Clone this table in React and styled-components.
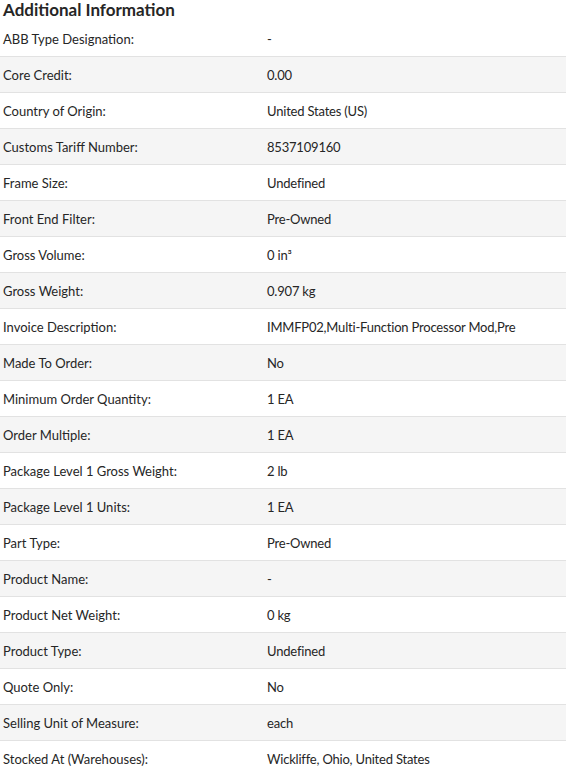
import React from "react";
import styled, { createGlobalStyle } from "styled-components";

const GlobalStyle = createGlobalStyle`
	body {
		margin: 0;
		background: #ffffff;
		font-family: "Lato", "Noto Sans", sans-serif;
		color: #262626;
	}
`;

const Section = styled.section`
	width: 566px;
`;

const Title = styled.h2`
	margin: 0;
	padding: 1px 3px 0;
	height: 20px;
	line-height: 18px;
	font-size: 17px;
	font-weight: 700;
	color: #262626;
`;

const Row = styled.div`
	display: grid;
	grid-template-columns: 264px 1fr;
	align-items: center;
	height: 35px;
	padding-left: 3px;
	border-bottom: 1px solid #e2e2e2;
	background: ${(p) => (p.$shaded ? "#f5f5f5" : "#ffffff")};
	font-size: 13px;
`;

const Label = styled.span`
	color: #262626;
`;

const Value = styled.span`
	color: #262626;
	white-space: nowrap;
	letter-spacing: -0.2px;
`;

const rows = [
	["ABB Type Designation:", "-"],
	["Core Credit:", "0.00"],
	["Country of Origin:", "United States (US)"],
	["Customs Tariff Number:", "8537109160"],
	["Frame Size:", "Undefined"],
	["Front End Filter:", "Pre-Owned"],
	["Gross Volume:", "0 in³"],
	["Gross Weight:", "0.907 kg"],
	["Invoice Description:", "IMMFP02,Multi-Function Processor Mod,Pre"],
	["Made To Order:", "No"],
	["Minimum Order Quantity:", "1 EA"],
	["Order Multiple:", "1 EA"],
	["Package Level 1 Gross Weight:", "2 lb"],
	["Package Level 1 Units:", "1 EA"],
	["Part Type:", "Pre-Owned"],
	["Product Name:", "-"],
	["Product Net Weight:", "0 kg"],
	["Product Type:", "Undefined"],
	["Quote Only:", "No"],
	["Selling Unit of Measure:", "each"],
	["Stocked At (Warehouses):", "Wickliffe, Ohio, United States"],
];

export default function App() {
	return (
		<>
			<GlobalStyle />
			<Section>
				<Title>Additional Information</Title>
				{rows.map(([label, value], i) => (
					<Row key={label} $shaded={i % 2 === 1}>
						<Label>{label}</Label>
						<Value>{value}</Value>
					</Row>
				))}
			</Section>
		</>
	);
}
